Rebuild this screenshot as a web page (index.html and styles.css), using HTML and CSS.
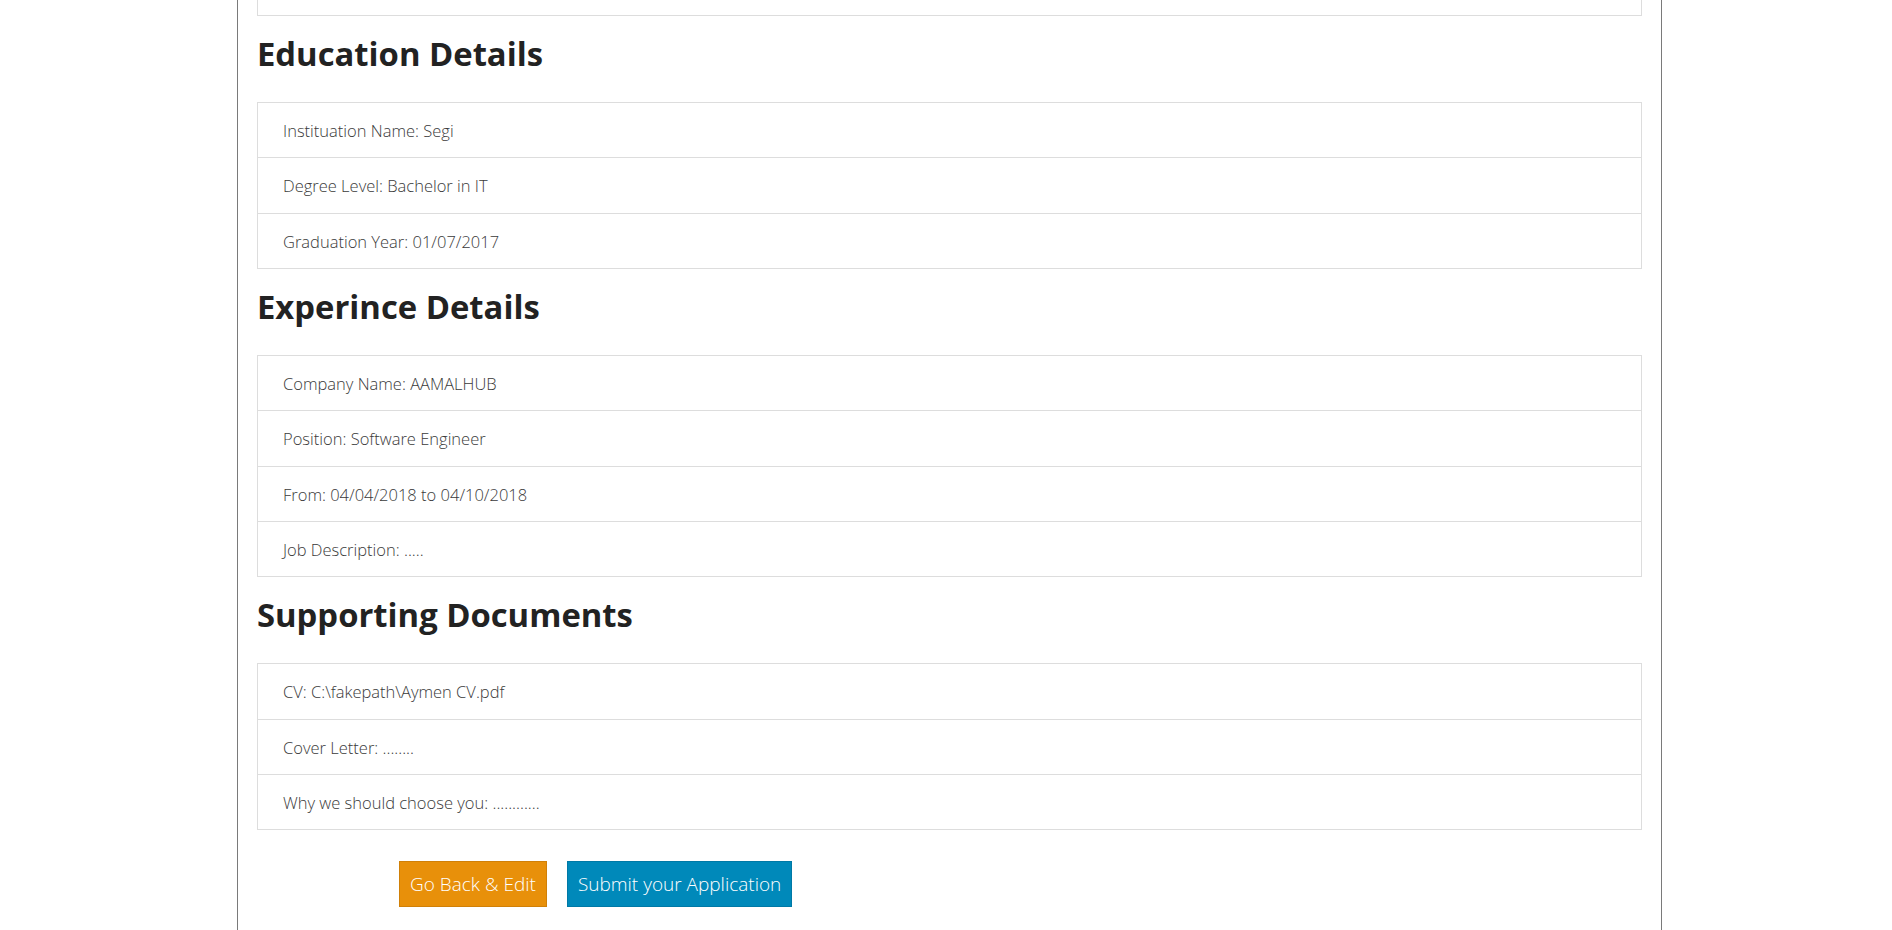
FILE: index.html
```html
<!DOCTYPE html>
<html lang="en">
<head>
<meta charset="utf-8">
<title>Review Application</title>
<link rel="stylesheet" href="styles.css">
</head>
<body>
<div class="page">
  <div class="panel panel-cut"></div>

  <h2 class="section-title">Education Details</h2>
  <ul class="panel list">
    <li class="item">Instituation Name: Segi</li>
    <li class="item">Degree Level: Bachelor in IT</li>
    <li class="item">Graduation Year: 01/07/2017</li>
  </ul>

  <h2 class="section-title">Experince Details</h2>
  <ul class="panel list">
    <li class="item">Company Name: AAMALHUB</li>
    <li class="item">Position: Software Engineer</li>
    <li class="item">From: 04/04/2018 to 04/10/2018</li>
    <li class="item">Job Description: .....</li>
  </ul>

  <h2 class="section-title">Supporting Documents</h2>
  <ul class="panel list">
    <li class="item">CV: C:\fakepath\Aymen CV.pdf</li>
    <li class="item">Cover Letter: ........</li>
    <li class="item">Why we should choose you: ............</li>
  </ul>

  <div class="actions">
    <button class="btn btn-edit" type="button">Go Back &amp; Edit</button>
    <button class="btn btn-submit" type="button">Submit your Application</button>
  </div>
</div>
</body>
</html>
```

FILE: styles.css
```css
html, body {
  margin: 0;
  padding: 0;
  background: #ffffff;
}

body {
  font-family: "Open Sans", "Liberation Sans", sans-serif;
  color: #333333;
}

.page {
  box-sizing: border-box;
  width: 1425px;
  margin-left: 237px;
  min-height: 930px;
  padding: 0 19px;
  border-left: 1px solid #7a7a7a;
  border-right: 1px solid #7a7a7a;
}

.panel {
  border: 1px solid #dddddd;
  background: #ffffff;
}

.panel-cut {
  border-top: none;
  height: 15px;
}

.section-title {
  margin: 19px 0 30px;
  font-size: 32.8px;
  line-height: 37px;
  font-weight: 700;
  color: #222222;
}

.list {
  list-style: none;
  margin: 0;
  padding: 0;
}

.item {
  padding: 15px 25px 14px;
  font-size: 16.5px;
  line-height: 25.33px;
  font-weight: 300;
  color: #3a3a3a;
  border-bottom: 1px solid #dddddd;
}

.item:last-child {
  border-bottom: none;
}

.actions {
  display: flex;
  gap: 20px;
  margin: 31px 0 0 142px;
}

.btn {
  font-family: "Open Sans", "Liberation Sans", sans-serif;
  font-size: 19px;
  font-weight: 300;
  line-height: 24px;
  color: #ffffff;
  padding: 10px 10px;
  border: 1px solid;
  border-radius: 0;
  cursor: pointer;
}

.btn-edit {
  background: #e8900a;
  border-color: #d08008;
}

.btn-submit {
  background: #0089ba;
  border-color: #0079a6;
}
```
